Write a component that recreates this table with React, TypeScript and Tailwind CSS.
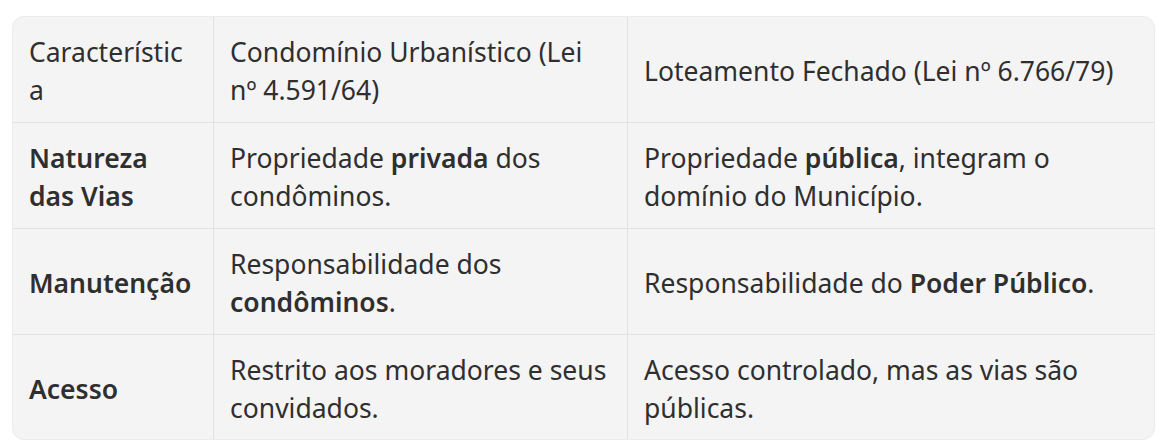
const rows: { c: React.ReactNode; a: React.ReactNode; b: React.ReactNode }[] = [
  {
    c: "Característica",
    a: "Condomínio Urbanístico (Lei nº 4.591/64)",
    b: "Loteamento Fechado (Lei nº 6.766/79)",
  },
  {
    c: <strong className="font-semibold">Natureza das Vias</strong>,
    a: (
      <>
        Propriedade <strong className="font-semibold">privada</strong> dos condôminos.
      </>
    ),
    b: (
      <>
        Propriedade <strong className="font-semibold">pública</strong>, integram o domínio do Município.
      </>
    ),
  },
  {
    c: <strong className="font-semibold">Manutenção</strong>,
    a: (
      <>
        Responsabilidade dos <strong className="font-semibold">condôminos</strong>.
      </>
    ),
    b: (
      <>
        Responsabilidade do <strong className="font-semibold">Poder Público</strong>.
      </>
    ),
  },
  {
    c: <strong className="font-semibold">Acesso</strong>,
    a: "Restrito aos moradores e seus convidados.",
    b: "Acesso controlado, mas as vias são públicas.",
  },
];

export default function App() {
  return (
    <div className="w-[1166px] h-[448px] bg-white pt-[16px] px-[12px]" style={{ fontFamily: "'Noto Sans', sans-serif" }}>
      <div className="w-[1143px] rounded-[12px] bg-[#f4f4f4] border border-[#ececec] overflow-hidden text-[26.5px] leading-[38px] text-[#2f2f2f]">
        {rows.map((r, i) => (
          <div
            key={i}
            className={`grid grid-cols-[201px_414px_1fr] ${i < rows.length - 1 ? "h-[106px] border-b border-[#e2e2e2]" : "h-[104px]"}`}
          >
            <div className="flex items-center px-[16px] pt-[3px] border-r border-[#e2e2e2] [overflow-wrap:anywhere]">
              <div className="min-w-0">{r.c}</div>
            </div>
            <div className="flex items-center px-[16px] pt-[3px] border-r border-[#e2e2e2]">
              <div>{r.a}</div>
            </div>
            <div className="flex items-center px-[16px] pt-[3px]">
              <div>{r.b}</div>
            </div>
          </div>
        ))}
      </div>
    </div>
  );
}
